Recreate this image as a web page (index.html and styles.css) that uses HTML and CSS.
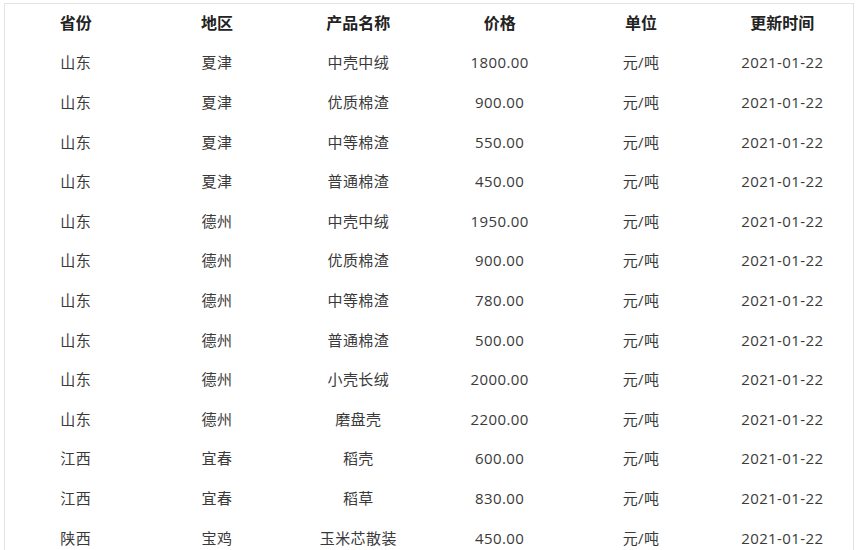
FILE: index.html
```html
<!DOCTYPE html>
<html lang="zh">
<head>
<meta charset="utf-8">
<link rel="stylesheet" href="styles.css">
</head>
<body>
<div class="panel">
<table class="price-table">
<thead>
<tr><th>省份</th><th>地区</th><th>产品名称</th><th>价格</th><th>单位</th><th>更新时间</th></tr>
</thead>
<tbody>
<tr><td>山东</td><td>夏津</td><td>中壳中绒</td><td>1800.00</td><td>元/吨</td><td>2021-01-22</td></tr>
<tr><td>山东</td><td>夏津</td><td>优质棉渣</td><td>900.00</td><td>元/吨</td><td>2021-01-22</td></tr>
<tr><td>山东</td><td>夏津</td><td>中等棉渣</td><td>550.00</td><td>元/吨</td><td>2021-01-22</td></tr>
<tr><td>山东</td><td>夏津</td><td>普通棉渣</td><td>450.00</td><td>元/吨</td><td>2021-01-22</td></tr>
<tr><td>山东</td><td>德州</td><td>中壳中绒</td><td>1950.00</td><td>元/吨</td><td>2021-01-22</td></tr>
<tr><td>山东</td><td>德州</td><td>优质棉渣</td><td>900.00</td><td>元/吨</td><td>2021-01-22</td></tr>
<tr><td>山东</td><td>德州</td><td>中等棉渣</td><td>780.00</td><td>元/吨</td><td>2021-01-22</td></tr>
<tr><td>山东</td><td>德州</td><td>普通棉渣</td><td>500.00</td><td>元/吨</td><td>2021-01-22</td></tr>
<tr><td>山东</td><td>德州</td><td>小壳长绒</td><td>2000.00</td><td>元/吨</td><td>2021-01-22</td></tr>
<tr><td>山东</td><td>德州</td><td>磨盘壳</td><td>2200.00</td><td>元/吨</td><td>2021-01-22</td></tr>
<tr><td>江西</td><td>宜春</td><td>稻壳</td><td>600.00</td><td>元/吨</td><td>2021-01-22</td></tr>
<tr><td>江西</td><td>宜春</td><td>稻草</td><td>830.00</td><td>元/吨</td><td>2021-01-22</td></tr>
<tr><td>陕西</td><td>宝鸡</td><td>玉米芯散装</td><td>450.00</td><td>元/吨</td><td>2021-01-22</td></tr>
</tbody>
</table>
</div>
</body>
</html>
```
FILE: styles.css
```css
html, body {
  margin: 0;
  padding: 0;
  background: #fff;
  overflow: hidden;
}
body {
  padding: 3px 0 0 4px;
  font-family: "Open Sans", "Noto Sans CJK SC", sans-serif;
  color: #333;
}
.panel {
  width: 848px;
  height: 560px;
  border: 1px solid #e3e3e3;
  border-bottom: none;
}
.price-table {
  width: 100%;
  table-layout: fixed;
  border-collapse: collapse;
  margin-top: -1px;
}
.price-table th,
.price-table td {
  height: 39.6px;
  padding: 0;
  line-height: 20px;
  text-align: center;
  vertical-align: middle;
}
.price-table th {
  font-size: 16px;
  font-weight: bold;
  color: #222;
}
.price-table td {
  font-size: 15px;
  letter-spacing: 0.4px;
  color: #3a3a3a;
}
```
